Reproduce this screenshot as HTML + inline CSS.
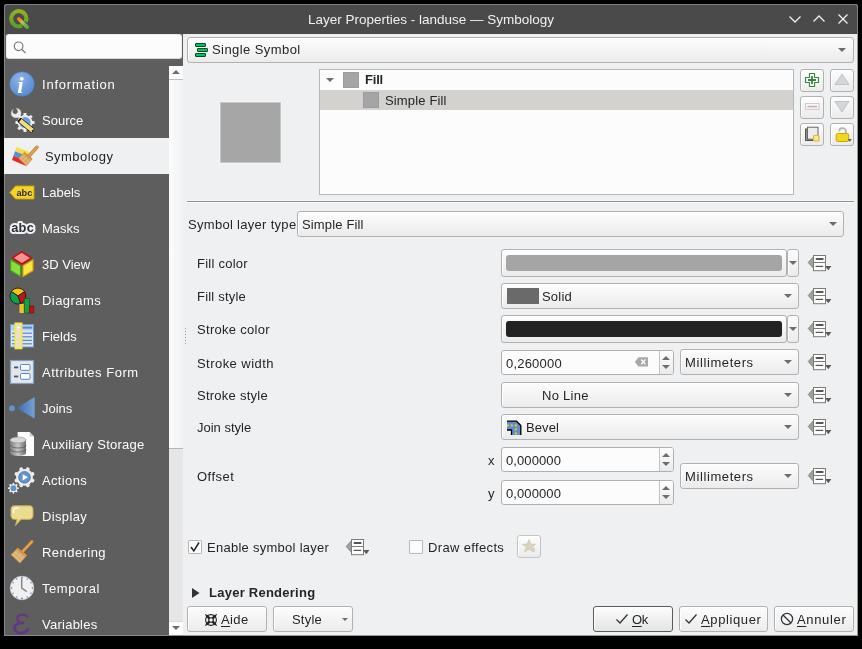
<!DOCTYPE html>
<html><head><meta charset="utf-8">
<style>
*{box-sizing:border-box;margin:0;padding:0}
html,body{width:862px;height:649px;background:#000;overflow:hidden}
body{position:relative;font-family:"Liberation Sans",sans-serif;font-size:13px;line-height:15px;color:#232629}
div,svg,span.t{position:absolute}
.t{white-space:nowrap;will-change:transform}
#win{left:4px;top:4px;width:854px;height:632px;background:#eff0f1;border:1px solid #9a9a9a;border-top-color:#7f7f7f;border-left-color:#8a8a8a;border-radius:3px 3px 0 0;overflow:hidden}
#title{left:4px;top:4px;width:854px;height:30px;background:#4a4a4a;border:1px solid #7f7f7f;border-bottom:none;border-radius:3px 3px 0 0}
.tt{color:#eff0f1;font-size:13.5px}
#side{left:4px;top:34px;width:179px;height:602px;background:#5e5e5e;border-left:1px solid #8a8a8a;border-bottom:1px solid #8a8a8a}
.it{left:4px;width:165px;height:36px;color:#fcfcfc}
.it .t{left:38px;top:11px}
.it svg{left:5px;top:6px;will-change:transform}
.sel{background:#eff0f1;color:#232629}
.sel .t{left:41px}
.sel svg{left:8px}
.btn{border:1px solid #b1b1b1;border-radius:3px;background:linear-gradient(#fdfdfd,#ebebeb);box-shadow:inset 1px 1px 0 #fff}
.edit{border:1px solid #b1b1b1;border-radius:3px;background:#fcfcfc}
.arr{width:0;height:0;border-left:4px solid transparent;border-right:4px solid transparent;border-top:4px solid #6d6d6d}
.lab{color:#232629;letter-spacing:0.2px}
</style></head><body>
<div id="win"></div>
<div id="title"></div>
<!-- QGIS logo -->
<svg style="left:8px;top:8px" width="22" height="22" viewBox="0 0 22 22">
 <defs><linearGradient id="qg" x1="0" y1="0" x2="0" y2="1"><stop offset="0" stop-color="#93b020"/><stop offset="1" stop-color="#58a030"/></linearGradient>
 <linearGradient id="qp" gradientUnits="userSpaceOnUse" x1="10.4" y1="10.8" x2="19.4" y2="19.2"><stop offset="0" stop-color="#f27820"/><stop offset="0.15" stop-color="#f08828"/><stop offset="0.4" stop-color="#c8c058"/><stop offset="0.7" stop-color="#7ab848"/><stop offset="1" stop-color="#60a840"/></linearGradient></defs>
 <path d="M17.7 13.9 A7.6 7.6 0 1 0 14 17.6" fill="none" stroke="url(#qg)" stroke-width="4"/>
 <path d="M10.8 11 L19.2 19.1" stroke="url(#qp)" stroke-width="3.8" stroke-linecap="round"/>
</svg>
<span class="t tt" style="left:308px;top:12px">Layer Properties - landuse — Symbology</span>
<!-- window controls -->
<svg style="left:786px;top:10px" width="66" height="18" viewBox="0 0 66 18">
 <path d="M3.5 6.5 L9 12 L14.5 6.5" fill="none" stroke="#f0f0f0" stroke-width="1.3"/>
 <path d="M27.5 11.5 L33 6 L38.5 11.5" fill="none" stroke="#f0f0f0" stroke-width="1.3"/>
 <path d="M52.5 4.5 L61.5 13.5 M61.5 4.5 L52.5 13.5" fill="none" stroke="#f0f0f0" stroke-width="1.3"/>
</svg>
<div id="side"></div>
<!-- search -->
<div style="left:6px;top:34px;width:176px;height:25px;background:#fcfcfc;border-radius:3px;border:1px solid #ececec;border-bottom-color:#d6d6d6"></div>
<svg style="left:12px;top:39.5px" width="16" height="16" viewBox="0 0 16 16"><circle cx="6.6" cy="6.3" r="4.3" fill="none" stroke="#7a7a7a" stroke-width="1.2"/><path d="M10 9.5 L13.5 13" stroke="#7a7a7a" stroke-width="1.3"/></svg>
<!-- SIDEBAR ITEMS -->
<div class="it" style="top:66px"><svg width="26" height="26" viewBox="0 0 26 26" style="left:5px;top:5px"><defs><radialGradient id="ib" cx="0.4" cy="0.3" r="0.8"><stop offset="0" stop-color="#8db4e8"/><stop offset="1" stop-color="#4f86cc"/></radialGradient></defs><circle cx="13" cy="13" r="12.3" fill="url(#ib)" stroke="#4a7cc0" stroke-width="0.6"/><text x="8.2" y="21.5" font-family="Liberation Serif" font-style="italic" font-weight="bold" font-size="23" fill="#fff">i</text></svg><span class="t" style=";letter-spacing:0.78px">Information</span></div>
<div class="it" style="top:102px"><svg width="26" height="26" viewBox="0 0 26 26" style="left:5px;top:5px"><g fill="#ececec"><circle cx="16" cy="15.5" r="7.4"/><g stroke="#ececec" stroke-width="3"><path d="M16 6 L16 25 M6.5 15.5 L25.5 15.5 M9.3 8.8 L22.7 22.2 M22.7 8.8 L9.3 22.2"/></g></g><circle cx="16" cy="15.5" r="5.6" fill="#6a9ede"/><path d="M4.5 2.2 C1.5 3.5 1.2 8 4 10 C6 11.5 8.6 11 9.8 10.2 L12.8 13 L14.6 11.2 L11.6 8.4 C12.6 6.6 12.2 3.4 10 2 C9 1.4 7.8 1.2 7 1.4 C8.8 2.6 9.4 4.6 8 6.2 C6.4 7.6 4.6 7.2 3.8 5.6 C3.4 4.4 3.8 3 4.5 2.2 Z" fill="#eceeec" stroke="#a0a0a0" stroke-width="0.5"/><path d="M12 11.1 L25.5 22.1 L22.5 25.9 L9 14.9 Z" fill="#f2dc78" stroke="#222" stroke-width="0.9"/><path d="M12 11.3 L9.2 14.7" stroke="#111" stroke-width="1.8"/><circle cx="23.6" cy="23.6" r="0.9" fill="#333"/></svg><span class="t">Source</span></div>
<div class="it sel" style="top:138px"><svg width="28" height="26" viewBox="0 0 28 26" style="left:7px;top:6px"><path d="M5.5 3 L18.4 8 L17.1 12.6 L4 7.3 Z" fill="#f6e04a"/><path d="M4 7.3 L17.1 12.6 L15.9 17.2 L2.5 11.7 Z" fill="#5a90d6"/><path d="M2.5 11.7 L15.9 17.2 L14.6 21.8 L1 16 Z" fill="#e42a2a"/><path d="M18.4 11.6 L26 3.2" stroke="#b87a28" stroke-width="3.4" stroke-linecap="round"/><path d="M18.4 11.6 L26 3.2" stroke="#e0a452" stroke-width="2" stroke-linecap="round"/><path d="M7.6 14.2 L13.5 8.3 L21.2 14.9 L15.3 21.8 Z" fill="#e2b878" stroke="#b8843c" stroke-width="0.7"/><path d="M13.5 8.3 L21.2 14.9 L20 16.3 L12.3 9.7 Z" fill="#d89440"/><path d="M9.6 12.2 L17 19.3 M11.4 10.4 L19 17.2 M10 16.3 L16.5 10.8 M12.5 18.8 L19 13" stroke="#c09050" stroke-width="0.45"/></svg><span class="t" style="letter-spacing:0.45px">Symbology</span></div>
<div class="it" style="top:174px"><svg width="26" height="16" viewBox="0 0 26 16" style="left:5px;top:10.5px"><path d="M6.5 1 L25 1 L25 14 L6.5 14 L0.8 7.5 Z" fill="#f3d22a" stroke="#c9a400" stroke-width="1"/><text x="7.5" y="10.8" font-family="Liberation Sans" font-weight="bold" font-size="9.2" fill="#2a2a2a">abc</text></svg><span class="t">Labels</span></div>
<div class="it" style="top:210px"><svg width="28" height="18" viewBox="0 0 28 18" style="left:4px;top:8px"><text x="3.2" y="14.2" font-family="Liberation Sans" font-weight="bold" font-size="12.8" fill="#2e2e2e" stroke="#eef2fa" stroke-width="4" stroke-linejoin="round" paint-order="stroke" letter-spacing="0.3">abc</text></svg><span class="t">Masks</span></div>
<div class="it" style="top:246px"><svg width="26" height="28" viewBox="0 0 26 28" style="left:5px;top:4px"><path d="M3.4 7.9 L12.8 1.8 L22.4 8.1 L12.8 14 Z" fill="#f59292" stroke="#cc0a0a" stroke-width="1.5" stroke-linejoin="round"/><path d="M1.6 9.8 L11.6 15.8 L11.6 26.4 L1.6 20.6 Z" fill="#88e03c" stroke="#4c9e12" stroke-width="1.2" stroke-linejoin="round"/><path d="M14 15.8 L24 9.8 L24 20.6 L14 26.4 Z" fill="#fce44a" stroke="#d8a600" stroke-width="1.2" stroke-linejoin="round"/></svg><span class="t">3D View</span></div>
<div class="it" style="top:282px"><svg width="26" height="28" viewBox="0 0 26 28" style="left:5px;top:5px"><path d="M9 9 L2.4 4.6 A8 8 0 0 1 15.6 4.6 Z" fill="#f8c400" stroke="#1a1a1a" stroke-width="0.9" stroke-linejoin="round"/><path d="M9 9 L15.6 4.6 A8 8 0 0 1 11.5 16.6 Z" fill="#c41414" stroke="#1a1a1a" stroke-width="0.9" stroke-linejoin="round"/><path d="M9 9 L11.5 16.6 A8 8 0 0 1 2.4 4.6 Z" fill="#12a04a" stroke="#1a1a1a" stroke-width="0.9" stroke-linejoin="round"/><rect x="10.5" y="17" width="4.5" height="9" fill="#f8c020"/><rect x="15.2" y="11.5" width="5.4" height="14.5" fill="#18a040" stroke="#0e5a22" stroke-width="0.7"/><rect x="20.6" y="19" width="4.2" height="7" fill="#c01414" stroke="#7a0e0e" stroke-width="0.7"/></svg><span class="t" style="letter-spacing:0.43px">Diagrams</span></div>
<div class="it" style="top:318px"><svg width="26" height="28" viewBox="0 0 26 28" style="left:5px;top:4px"><rect x="1.5" y="2.5" width="23" height="22.5" fill="#dfe5ee" stroke="#6e9ad2" stroke-width="1"/><rect x="2" y="3" width="22" height="5.5" fill="#b4d0ee"/><rect x="8" y="4.6" width="15" height="2" fill="#5a88c8"/><g fill="#5a88c8"><rect x="3" y="10.6" width="20" height="1.2"/><rect x="3" y="14.2" width="20" height="1.2"/><rect x="3" y="17.8" width="20" height="1.2"/><rect x="3" y="21.2" width="20" height="1.2"/></g><rect x="6.2" y="1.2" width="6.6" height="25.4" fill="#ebe0c0" stroke="#f6ee30" stroke-width="1.4"/><circle cx="9.4" cy="5.6" r="1" fill="#fff"/></svg><span class="t">Fields</span></div>
<div class="it" style="top:354px"><svg width="26" height="26" viewBox="0 0 26 26" style="left:5px;top:5px"><rect x="1.5" y="1.5" width="23" height="23" fill="#e6e6e6" stroke="#7aa0d0" stroke-width="1.2"/><rect x="11.5" y="5.5" width="9.5" height="5.8" rx="1" fill="#fbfcfe" stroke="#5a88c8" stroke-width="1"/><rect x="11.5" y="14.5" width="9.5" height="5.8" rx="1" fill="#fbfcfe" stroke="#5a88c8" stroke-width="1"/><rect x="5" y="7.5" width="4.2" height="1.8" fill="#3a5a80"/><rect x="5" y="16.6" width="4.2" height="1.8" fill="#3a5a80"/></svg><span class="t" style="letter-spacing:0.52px">Attributes Form</span></div>
<div class="it" style="top:390px"><svg width="26" height="26" viewBox="0 0 26 26" style="left:5px;top:6px"><defs><linearGradient id="jg" x1="0" y1="0" x2="1" y2="0"><stop offset="0" stop-color="#3a6aa8"/><stop offset="1" stop-color="#74a2d8"/></linearGradient></defs><circle cx="2.9" cy="12.3" r="3" fill="#5f90cf"/><path d="M7.4 12 L25.6 1 L25.6 22.6 Z" fill="url(#jg)"/></svg><span class="t">Joins</span></div>
<div class="it" style="top:426px"><svg width="26" height="28" viewBox="0 0 26 28" style="left:5px;top:4px"><path d="M8.6 2 L20.6 2 L25 6.4 L25 26 L8.6 26 Z" fill="#fcfcfc"/><path d="M20.6 2 L20.6 6.4 L25 6.4 Z" fill="#d0d0d0"/><defs><linearGradient id="db" x1="0" y1="0" x2="1" y2="0"><stop offset="0" stop-color="#7a7a7a"/><stop offset="0.5" stop-color="#c8c8c8"/><stop offset="1" stop-color="#6a6a6a"/></linearGradient></defs><path d="M1 10 L1 23 A8 3 0 0 0 17 23 L17 10 Z" fill="url(#db)"/><ellipse cx="9" cy="10" rx="8" ry="3" fill="#d8d8d8" stroke="#888" stroke-width="0.6"/><path d="M1 15 A8 3 0 0 0 17 15 M1 19 A8 3 0 0 0 17 19" fill="none" stroke="#555" stroke-width="0.7"/></svg><span class="t" style="letter-spacing:0.25px">Auxiliary Storage</span></div>
<div class="it" style="top:462px"><svg width="28" height="28" viewBox="0 0 28 28" style="left:4px;top:4px"><g fill="#ececec"><circle cx="16.5" cy="11.3" r="8.4"/><g stroke="#ececec" stroke-width="3.8" stroke-linecap="round" transform="rotate(22.5 16.5 11.3)"><path d="M16.5 2.6 L16.5 20 M7.8 11.3 L25.2 11.3 M10.35 5.15 L22.65 17.45 M22.65 5.15 L10.35 17.45"/></g></g><circle cx="16.5" cy="11.3" r="5.9" fill="#5f93d2" stroke="#2f4f70" stroke-width="0.5"/><path d="M14.6 8.2 L20 11.3 L14.6 14.4 Z" fill="#fff"/><g fill="#ececec"><circle cx="5.4" cy="22.2" r="3.9"/><g stroke="#ececec" stroke-width="1.8" stroke-linecap="round"><path d="M5.4 17.6 L5.4 26.8 M0.8 22.2 L10 22.2 M2.15 18.95 L8.65 25.45 M8.65 18.95 L2.15 25.45"/></g></g><circle cx="5.4" cy="22.2" r="2.9" fill="#5f93d2"/></svg><span class="t" style="letter-spacing:0.35px">Actions</span></div>
<div class="it" style="top:498px"><svg width="26" height="26" viewBox="0 0 26 26" style="left:5px;top:5px"><path d="M5.5 2.8 L20.5 2.8 C23 2.8 24 4 24 6.5 L24 12.5 C24 15 23 16.3 20.5 16.3 L12 16.3 L6.5 22.5 L8.2 16.3 L5.5 16.3 C3 16.3 2 15 2 12.5 L2 6.5 C2 4 3 2.8 5.5 2.8 Z" fill="#ebdc90" stroke="#c8b050" stroke-width="1"/><path d="M4.4 10 C4.2 6 5.4 4.8 9.8 4.8" fill="none" stroke="#fff" stroke-width="1.3"/></svg><span class="t" style="letter-spacing:0.35px">Display</span></div>
<div class="it" style="top:534px"><svg width="26" height="26" viewBox="0 0 26 26" style="left:6px;top:5px"><path d="M11.8 13.4 L21.9 2.6" stroke="#b87a28" stroke-width="3.4" stroke-linecap="round"/><path d="M11.8 13.4 L21.9 2.6" stroke="#e6a650" stroke-width="2" stroke-linecap="round"/><path d="M1 15.7 L7.7 8.9 L16.8 16.3 L10 24.2 Z" fill="#e4bc80" stroke="#b8843c" stroke-width="0.7"/><path d="M7.7 8.9 L16.8 16.3 L15.2 18.1 L6.1 10.7 Z" fill="#d89440"/><path d="M3.2 13.4 L12 21.8 M5.2 11.4 L14 19.4 M4 18.6 L11.6 11.6 M6.8 21.4 L14.2 14.2" stroke="#c09050" stroke-width="0.45"/></svg><span class="t" style="letter-spacing:0.45px">Rendering</span></div>
<div class="it" style="top:570px"><svg width="26" height="26" viewBox="0 0 26 26" style="left:5px;top:5px"><circle cx="13" cy="13" r="11.8" fill="#f0f0f0" stroke="#d0d0d0" stroke-width="0.6"/><g fill="#4a7ac0"><circle cx="13" cy="2.6" r="0.8"/><circle cx="13" cy="23.4" r="0.8"/><circle cx="2.6" cy="13" r="0.8"/><circle cx="23.4" cy="13" r="0.8"/><circle cx="18.2" cy="4" r="0.7"/><circle cx="22" cy="7.8" r="0.7"/><circle cx="22" cy="18.2" r="0.7"/><circle cx="18.2" cy="22" r="0.7"/><circle cx="7.8" cy="22" r="0.7"/><circle cx="4" cy="18.2" r="0.7"/><circle cx="4" cy="7.8" r="0.7"/><circle cx="7.8" cy="4" r="0.7"/></g><path d="M12.7 3.2 L12.7 13.2 L17.8 16.6" fill="none" stroke="#888" stroke-width="1.5"/></svg><span class="t" style="letter-spacing:0.55px">Temporal</span></div>
<div class="it" style="top:606px"><svg width="26" height="26" viewBox="0 0 26 26" style="left:5px;top:5px"><path d="M18.6 5.6 C15.5 2.6 8.4 2.8 8.4 7.4 C8.4 10.4 11 11.8 13.8 11.8" fill="none" stroke="#643781" stroke-width="2.2" stroke-linecap="round"/><path d="M13.8 11.8 C9.2 11.8 5.6 13.6 5.6 17 C5.6 21 10 22.4 13 22 C15.6 21.7 17.6 20.6 19.2 18.6" fill="none" stroke="#643781" stroke-width="2.8" stroke-linecap="round"/></svg><span class="t" style="letter-spacing:0.25px">Variables</span></div>

<!-- scrollbar -->
<div style="left:169px;top:66px;width:14px;height:569px;background:#e6e6e6"></div>
<div style="left:169px;top:66px;width:14px;height:14px;background:#fcfcfc;border-bottom:1px solid #bdbdbd"></div>
<div class="arr" style="left:172px;top:70px;border-top:none;border-bottom:4px solid #6d6d6d"></div>
<div style="left:169px;top:80px;width:14px;height:369px;background:linear-gradient(90deg,#fdfdfd,#f1f1f1);border-bottom:1px solid #b4b4b4"></div>
<div style="left:169px;top:621px;width:14px;height:14px;background:#fcfcfc;border-top:1px solid #d8d8d8"></div>
<div class="arr" style="left:172px;top:626px"></div>
<svg width="0" height="0" style="left:0;top:0"><defs>
<symbol id="dd" viewBox="0 0 26 18"><path d="M1.2 8.5 L6.5 2.6 L6.5 14.4 Z" fill="#a0a0a0" stroke="#7a7a7a" stroke-width="0.8" stroke-linejoin="round"/><rect x="6.5" y="1.5" width="12" height="15.2" fill="#fdfdfd" stroke="#7c7c74" stroke-width="1"/><path d="M6.5 8.5 L18.5 8.5" stroke="#7c7c74" stroke-width="1"/><rect x="8.6" y="4" width="8" height="2" rx="0.8" fill="#555"/><rect x="8.6" y="11.8" width="7.6" height="1.2" fill="#555"/><path d="M18.2 12 L24.4 12 L21.3 16.2 Z" fill="#5a5a5a"/></symbol>
</defs></svg>
<!-- Single Symbol combo -->
<div class="btn" style="left:187px;top:37px;width:667px;height:26px"></div>
<svg style="left:194px;top:42px" width="16" height="16" viewBox="0 0 16 16"><g fill="#02c45a" stroke="#084a28" stroke-width="1"><rect x="1.5" y="1.5" width="10" height="3" rx="0.4"/><rect x="3.5" y="6.5" width="10" height="3" rx="0.4"/><rect x="1.5" y="11.5" width="10" height="3" rx="0.4"/></g></svg>
<span class="t lab" style="left:212px;top:42px;letter-spacing:0.43px">Single Symbol</span>
<div class="arr" style="left:838px;top:48px"></div>
<!-- preview -->
<div style="left:220px;top:102px;width:61px;height:61px;background:#a6a6a6;border:1px solid #c6c6c6;box-shadow:0 0 0 1px #f3f4f5"></div>
<!-- tree -->
<div class="edit" style="left:319px;top:69px;width:475px;height:126px;border-radius:0;border-color:#b8b8b8"></div>
<div style="left:320px;top:90px;width:473px;height:20px;background:#d3d2cf"></div>
<div class="arr" style="left:326px;top:78px"></div>
<div style="left:343px;top:72px;width:16px;height:16px;background:#a5a5a5;border:1px solid #9c9c9c"></div>
<span class="t" style="left:365px;top:72px;font-weight:bold;color:#232627;letter-spacing:-0.2px">Fill</span>
<div style="left:363px;top:92px;width:16px;height:16px;background:#a5a5a5;border:1px solid #9c9c9c"></div>
<span class="t lab" style="left:385px;top:93px;letter-spacing:0.15px">Simple Fill</span>
<!-- tool buttons -->
<div class="btn" style="left:800px;top:69px;width:24px;height:23px"></div>
<div class="btn" style="left:830px;top:69px;width:24px;height:23px"></div>
<div class="btn" style="left:800px;top:96px;width:24px;height:23px"></div>
<div class="btn" style="left:830px;top:96px;width:24px;height:23px"></div>
<div class="btn" style="left:800px;top:123px;width:24px;height:23px"></div>
<div class="btn" style="left:830px;top:123px;width:24px;height:23px"></div>
<svg style="left:804px;top:72px" width="16" height="16" viewBox="0 0 16 16"><path d="M5.5 1.5 L10.5 1.5 L10.5 5.5 L14.5 5.5 L14.5 10.5 L10.5 10.5 L10.5 14.5 L5.5 14.5 L5.5 10.5 L1.5 10.5 L1.5 5.5 L5.5 5.5 Z" fill="#fff" stroke="#3c8c40" stroke-width="1.2"/><path d="M8 4 L8 12 M4 8 L12 8" stroke="#3a8040" stroke-width="1.8"/></svg>
<svg style="left:834px;top:73px" width="16" height="13" viewBox="0 0 16 13"><path d="M8 1 L15 11.5 L1 11.5 Z" fill="#d4d7da" stroke="#b8bbbe" stroke-width="0.8"/></svg>
<svg style="left:805px;top:103px" width="15" height="8" viewBox="0 0 15 8"><rect x="0.5" y="0.5" width="13.5" height="6" fill="none" stroke="#d8c8c8" stroke-width="1"/><rect x="2.5" y="2.8" width="9.5" height="1.6" fill="#c8b0b8"/></svg>
<svg style="left:834px;top:100px" width="16" height="13" viewBox="0 0 16 13"><path d="M1 1.5 L15 1.5 L8 12 Z" fill="#d4d7da" stroke="#b8bbbe" stroke-width="0.8"/></svg>
<svg style="left:804px;top:126px" width="16" height="16" viewBox="0 0 16 16"><rect x="1.5" y="3" width="10" height="11.5" fill="#909090" stroke="#555" stroke-width="1"/><rect x="3.5" y="1.2" width="10.5" height="12" fill="#ececec" stroke="#666" stroke-width="1"/><rect x="9.5" y="9.5" width="5.5" height="5.5" rx="1" fill="#f6e6a0" stroke="#e0b820" stroke-width="1.2"/></svg>
<svg style="left:835px;top:126px" width="18" height="17" viewBox="0 0 18 17"><path d="M4.2 5.2 C4.2 1.2 10.8 1.2 10.8 5 L10.8 8" fill="none" stroke="#b4b4b4" stroke-width="1.8"/><rect x="1.2" y="7.5" width="12.5" height="8" rx="1.5" fill="#f0d820" stroke="#c8a800" stroke-width="1"/><path d="M12.5 13 L17 13 L14.75 15.8 Z" fill="#666"/></svg>
<!-- separator -->
<div style="left:187px;top:200px;width:667px;height:3px;background:linear-gradient(#f6f7f7 0 1px,#8c9196 1px 2px,#fbfbfb 2px 3px)"></div>
<!-- symbol layer type -->
<span class="t lab" style="left:188px;top:217px;letter-spacing:0.3px">Symbol layer type</span>
<div class="btn" style="left:297px;top:211px;width:547px;height:26px"></div>
<span class="t lab" style="left:302px;top:217px;letter-spacing:0.15px">Simple Fill</span>
<div class="arr" style="left:829px;top:222px"></div>
<!-- labels -->
<span class="t lab" style="left:197px;top:256px;letter-spacing:0.25px">Fill color</span>
<span class="t lab" style="left:197px;top:289px;letter-spacing:0.2px">Fill style</span>
<span class="t lab" style="left:197px;top:322px;letter-spacing:0.3px">Stroke color</span>
<span class="t lab" style="left:197px;top:356px;letter-spacing:0.45px">Stroke width</span>
<span class="t lab" style="left:197px;top:388px;letter-spacing:0.25px">Stroke style</span>
<span class="t lab" style="left:197px;top:420px;letter-spacing:0px">Join style</span>
<span class="t lab" style="left:197px;top:469px;letter-spacing:0.5px">Offset</span>
<!-- splitter dots -->
<div style="left:185px;top:328px;width:1px;height:16px;background:repeating-linear-gradient(#9a9a9a 0 1px,transparent 1px 3px)"></div>
<!-- fill color -->
<div class="btn" style="left:501px;top:249px;width:286px;height:28px"></div>
<div style="left:506px;top:255px;width:276px;height:16px;border-radius:3px;background:#a5a5a5"></div>
<div class="btn" style="left:787px;top:249px;width:12px;height:28px"></div>
<div class="arr" style="left:789px;top:261px"></div>
<!-- fill style -->
<div class="btn" style="left:501px;top:283px;width:298px;height:26px"></div>
<div style="left:507px;top:288px;width:32px;height:16px;background:#6a6a6a"></div>
<span class="t lab" style="left:542px;top:289px;letter-spacing:0.2px">Solid</span>
<div class="arr" style="left:784px;top:294px"></div>
<!-- stroke color -->
<div class="btn" style="left:501px;top:315px;width:286px;height:28px"></div>
<div style="left:506px;top:321px;width:276px;height:16px;border-radius:3px;background:#232323"></div>
<div class="btn" style="left:787px;top:315px;width:12px;height:28px"></div>
<div class="arr" style="left:789px;top:327px"></div>
<!-- stroke width -->
<div class="edit" style="left:501px;top:350px;width:173px;height:25px"></div>
<div style="left:659px;top:351px;width:1px;height:23px;background:#c4c4c4"></div><div style="left:660px;top:351px;width:13px;height:23px;background:linear-gradient(#fdfdfd,#ebebeb);border-radius:0 2px 2px 0"></div>
<span class="t lab" style="left:506px;top:356px;letter-spacing:0.2px">0,260000</span>
<svg style="left:634px;top:356px" width="15" height="12" viewBox="0 0 15 12"><path d="M4.5 1.2 L14 1.2 L14 10.6 L4.5 10.6 L0.8 5.9 Z" fill="#a8a8a8"/><path d="M7.2 3.5 L11.4 8.3 M11.4 3.5 L7.2 8.3" stroke="#fff" stroke-width="1.3"/></svg>
<div class="arr" style="left:662px;top:356px;border-top:none;border-bottom:4px solid #6d6d6d"></div>
<div class="arr" style="left:662px;top:365px"></div>
<div class="btn" style="left:680px;top:349px;width:119px;height:26px"></div>
<span class="t lab" style="left:685px;top:355px;letter-spacing:0.6px">Millimeters</span>
<div class="arr" style="left:784px;top:360px"></div>
<!-- stroke style -->
<div class="btn" style="left:501px;top:382px;width:298px;height:26px"></div>
<span class="t lab" style="left:542px;top:388px;letter-spacing:0.27px">No Line</span>
<div class="arr" style="left:784px;top:393px"></div>
<!-- join style -->
<div class="btn" style="left:501px;top:414px;width:298px;height:26px"></div>
<svg style="left:506px;top:420px" width="16" height="16" viewBox="0 0 16 16"><path d="M1 1 L10.5 1 L15 5.5 L15 15 L5.5 15 L5.5 10 L1 10 Z" fill="#5d8ed2"/><path d="M1 1.2 L10.5 1.2 L14.8 5.5 L14.8 15 M1 10 L5.5 10 L5.5 15" fill="none" stroke="#000" stroke-width="1.3"/><g fill="#f2d000"><rect x="0.8" y="4.4" width="2" height="2"/><rect x="4.8" y="4.4" width="2" height="2"/><rect x="8.8" y="4.4" width="2" height="2"/><rect x="8.8" y="8.4" width="2" height="2"/><rect x="8.8" y="12.4" width="2" height="2"/></g></svg>
<span class="t lab" style="left:526px;top:420px;letter-spacing:0.1px">Bevel</span>
<div class="arr" style="left:784px;top:425px"></div>
<!-- offset -->
<span class="t lab" style="left:488px;top:453px">x</span>
<div class="edit" style="left:501px;top:447px;width:173px;height:25px"></div>
<div style="left:659px;top:448px;width:1px;height:23px;background:#c4c4c4"></div><div style="left:660px;top:448px;width:13px;height:23px;background:linear-gradient(#fdfdfd,#ebebeb);border-radius:0 2px 2px 0"></div>
<span class="t lab" style="left:506px;top:453px;letter-spacing:0.1px">0,000000</span>
<div class="arr" style="left:662px;top:453px;border-top:none;border-bottom:4px solid #6d6d6d"></div>
<div class="arr" style="left:662px;top:462px"></div>
<span class="t lab" style="left:488px;top:486px">y</span>
<div class="edit" style="left:501px;top:480px;width:173px;height:25px"></div>
<div style="left:659px;top:481px;width:1px;height:23px;background:#c4c4c4"></div><div style="left:660px;top:481px;width:13px;height:23px;background:linear-gradient(#fdfdfd,#ebebeb);border-radius:0 2px 2px 0"></div>
<span class="t lab" style="left:506px;top:486px;letter-spacing:0.1px">0,000000</span>
<div class="arr" style="left:662px;top:486px;border-top:none;border-bottom:4px solid #6d6d6d"></div>
<div class="arr" style="left:662px;top:495px"></div>
<div class="btn" style="left:680px;top:463px;width:119px;height:26px"></div>
<span class="t lab" style="left:685px;top:469px;letter-spacing:0.6px">Millimeters</span>
<div class="arr" style="left:784px;top:474px"></div>
<!-- DD icons -->
<svg style="left:807px;top:254px" width="26" height="18"><use href="#dd"/></svg>
<svg style="left:807px;top:287px" width="26" height="18"><use href="#dd"/></svg>
<svg style="left:807px;top:320px" width="26" height="18"><use href="#dd"/></svg>
<svg style="left:807px;top:353px" width="26" height="18"><use href="#dd"/></svg>
<svg style="left:807px;top:386px" width="26" height="18"><use href="#dd"/></svg>
<svg style="left:807px;top:418px" width="26" height="18"><use href="#dd"/></svg>
<svg style="left:807px;top:467px" width="26" height="18"><use href="#dd"/></svg>
<svg style="left:345px;top:538px" width="26" height="18"><use href="#dd"/></svg>
<!-- checkboxes -->
<div class="edit" style="left:188px;top:540px;width:14px;height:14px;border-radius:1px;border-color:#b8b8b8"></div>
<svg style="left:188px;top:540px" width="14" height="14" viewBox="0 0 14 14"><path d="M3 7 L5.8 11 L11 2.5" fill="none" stroke="#232627" stroke-width="1.5"/></svg>
<span class="t lab" style="left:207px;top:540px;letter-spacing:0.27px">Enable symbol layer</span>
<div class="edit" style="left:409px;top:540px;width:14px;height:14px;border-radius:1px;border-color:#b8b8b8"></div>
<span class="t lab" style="left:428px;top:540px;letter-spacing:0.35px">Draw effects</span>
<div class="btn" style="left:517px;top:535px;width:24px;height:23px;border-color:#c4c4c4"></div>
<svg style="left:521px;top:538px" width="16" height="16" viewBox="0 0 16 16"><path d="M8 1.5 L9.9 6 L14.6 6.2 L10.9 9.2 L12.2 13.8 L8 11.2 L3.8 13.8 L5.1 9.2 L1.4 6.2 L6.1 6 Z" fill="#d9d4bf" stroke="#c8c2a8" stroke-width="0.6"/><path d="M12 10 L13 10 L13 14" stroke="#b0b0b0" stroke-width="0.8" fill="none"/></svg>
<!-- layer rendering -->
<svg style="left:191px;top:587px" width="10" height="12" viewBox="0 0 10 12"><path d="M1 1 L8.5 6 L1 11 Z" fill="#333"/></svg>
<span class="t" style="left:209px;top:585px;font-weight:bold;color:#232627;letter-spacing:0.25px">Layer Rendering</span>
<!-- bottom buttons -->
<div class="btn" style="left:187px;top:606px;width:80px;height:26px"></div>
<svg style="left:204px;top:612.5px" width="14" height="14" viewBox="0 0 14 14"><circle cx="7" cy="7" r="5.4" fill="none" stroke="#232627" stroke-width="1.1"/><circle cx="7" cy="7" r="2.3" fill="none" stroke="#232627" stroke-width="1.1"/><path d="M2.6 2.6 L5.4 5.4 M11.4 2.6 L8.6 5.4 M2.6 11.4 L5.4 8.6 M11.4 11.4 L8.6 8.6" stroke="#232627" stroke-width="2.5"/><path d="M1.3 1.3 L3 3 M12.7 1.3 L11 3 M1.3 12.7 L3 11 M12.7 12.7 L11 11" stroke="#232627" stroke-width="1.2"/></svg>
<span class="t lab" style="left:221px;top:612px;letter-spacing:0.4px"><u style="text-underline-offset:2px">A</u>ide</span>
<div class="btn" style="left:273px;top:606px;width:80px;height:26px"></div>
<span class="t lab" style="left:292px;top:612px;letter-spacing:0.2px">Style</span>
<div class="arr" style="left:342px;top:618px;border-left-width:3px;border-right-width:3px;border-top-width:3px"></div>
<div class="btn" style="left:593px;top:606px;width:80px;height:26px;border-color:#5c5c5c;background:linear-gradient(#fdfdfd,#e3e4e5)"></div>
<svg style="left:615px;top:612px" width="14" height="14" viewBox="0 0 14 14"><path d="M1.5 7.5 L5 11 L12.5 2.5" fill="none" stroke="#31363b" stroke-width="1.3"/></svg>
<span class="t lab" style="left:632px;top:612px;letter-spacing:-0.4px"><u style="text-underline-offset:2px">O</u>k</span>
<div class="btn" style="left:679px;top:606px;width:89px;height:26px"></div>
<svg style="left:684px;top:612px" width="14" height="14" viewBox="0 0 14 14"><path d="M1.5 7.5 L5 11 L12.5 2.5" fill="none" stroke="#31363b" stroke-width="1.3"/></svg>
<span class="t lab" style="left:701px;top:612px;letter-spacing:0.62px"><u style="text-underline-offset:2px">A</u>ppliquer</span>
<div class="btn" style="left:774px;top:606px;width:80px;height:26px"></div>
<svg style="left:780px;top:612px" width="14" height="14" viewBox="0 0 14 14"><circle cx="7" cy="7" r="5.6" fill="none" stroke="#31363b" stroke-width="1.3"/><path d="M3 3 L11 11" stroke="#31363b" stroke-width="1.3"/></svg>
<span class="t lab" style="left:797px;top:612px;letter-spacing:0.65px"><u style="text-underline-offset:2px">A</u>nnuler</span>

</body></html>
